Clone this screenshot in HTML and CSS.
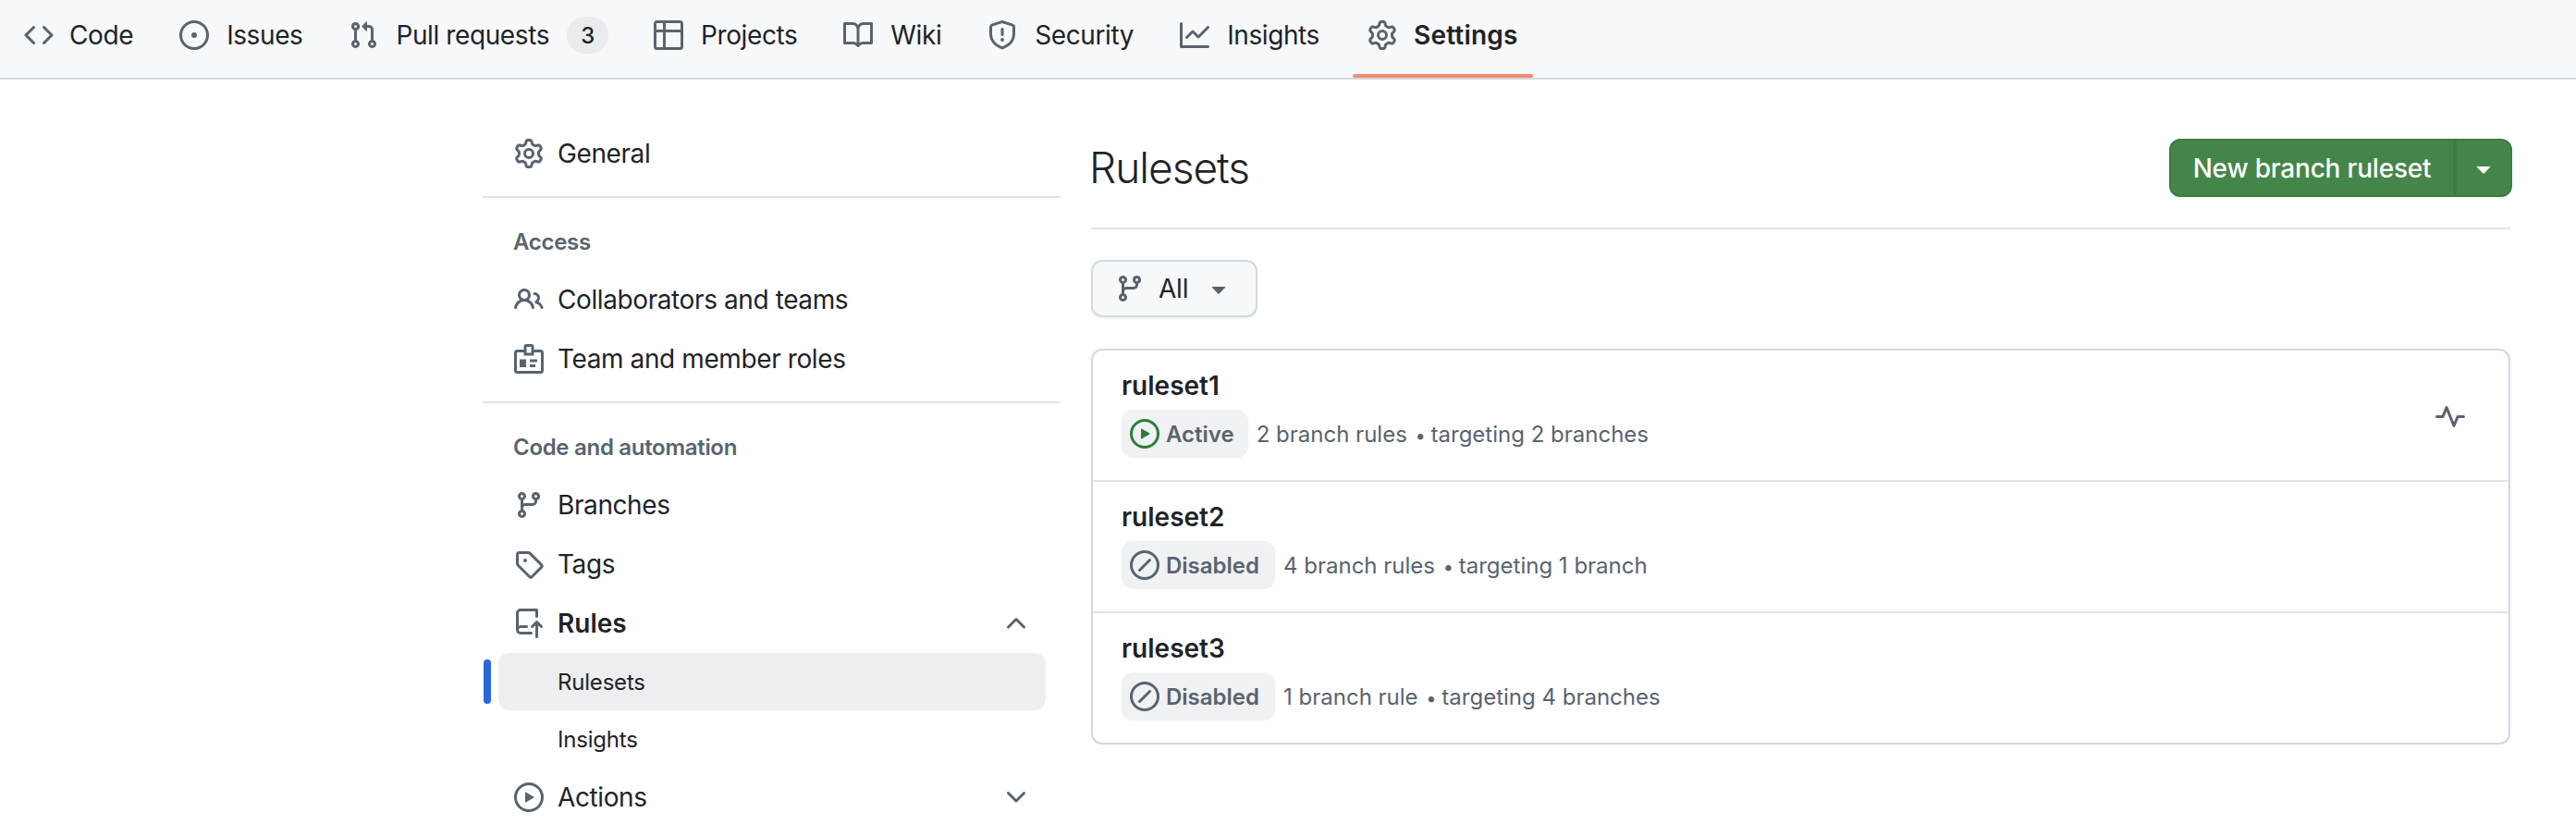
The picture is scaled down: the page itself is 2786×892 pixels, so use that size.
FILE: index.html
```html
<!DOCTYPE html>
<html lang="en">
<head>
    <meta charset="UTF-8">
    <meta name="viewport" content="width=device-width, initial-scale=1.0">
    <title>Rulesets</title>
    <link rel="stylesheet" href="styles.css">
</head>
<body>
    <svg class="sprite" xmlns="http://www.w3.org/2000/svg">
        <symbol id="i-code" viewBox="0 0 16 16"><path d="m11.28 3.22 4.25 4.25a.75.75 0 0 1 0 1.06l-4.25 4.25a.749.749 0 0 1-1.275-.326.749.749 0 0 1 .215-.734L13.94 8l-3.72-3.72a.749.749 0 0 1 .326-1.275.749.749 0 0 1 .734.215Zm-6.56 0a.751.751 0 0 1 1.042.018.751.751 0 0 1 .018 1.042L2.06 8l3.72 3.72a.749.749 0 0 1-.326 1.275.749.749 0 0 1-.734-.215L.47 8.53a.75.75 0 0 1 0-1.06Z"/></symbol>
        <symbol id="i-issue" viewBox="0 0 16 16"><path d="M8 9.5a1.5 1.5 0 1 0 0-3 1.5 1.5 0 0 0 0 3Z"/><path d="M8 0a8 8 0 1 1 0 16A8 8 0 0 1 8 0ZM1.5 8a6.5 6.5 0 1 0 13 0 6.5 6.5 0 0 0-13 0Z"/></symbol>
        <symbol id="i-pull" viewBox="0 0 16 16"><path d="M1.5 3.25a2.25 2.25 0 1 1 3 2.122v5.256a2.251 2.251 0 1 1-1.5 0V5.372A2.25 2.25 0 0 1 1.5 3.25Zm5.677-.177L9.573.677A.25.25 0 0 1 10 .854V2.5h1A2.5 2.5 0 0 1 13.5 5v5.628a2.251 2.251 0 1 1-1.5 0V5a1 1 0 0 0-1-1h-1v1.646a.25.25 0 0 1-.427.177L7.177 3.427a.25.25 0 0 1 0-.354ZM3.75 2.5a.75.75 0 1 0 0 1.5.75.75 0 0 0 0-1.5Zm0 9.5a.75.75 0 1 0 0 1.5.75.75 0 0 0 0-1.5Zm8.25.75a.75.75 0 1 0 1.5 0 .75.75 0 0 0-1.5 0Z"/></symbol>
        <symbol id="i-table" viewBox="0 0 16 16"><path d="M0 1.75C0 .784.784 0 1.75 0h12.5C15.216 0 16 .784 16 1.75v12.5A1.75 1.75 0 0 1 14.25 16H1.75A1.75 1.75 0 0 1 0 14.25ZM6.5 6.5v8h7.75a.25.25 0 0 0 .25-.25V6.5Zm8-1.5V1.75a.25.25 0 0 0-.25-.25H6.5V5Zm-13 1.5v7.75c0 .138.112.25.25.25H5v-8ZM5 5V1.5H1.75a.25.25 0 0 0-.25.25V5Z"/></symbol>
        <symbol id="i-book" viewBox="0 0 16 16"><path d="M0 1.75A.75.75 0 0 1 .75 1h4.253c1.227 0 2.317.59 3 1.501A3.743 3.743 0 0 1 11.006 1h4.245a.75.75 0 0 1 .75.75v10.5a.75.75 0 0 1-.75.75h-4.507a2.25 2.25 0 0 0-1.591.659l-.622.621a.75.75 0 0 1-1.06 0l-.622-.621A2.25 2.25 0 0 0 5.258 13H.75a.75.75 0 0 1-.75-.75Zm7.251 10.324.004-5.073-.002-2.253A2.25 2.25 0 0 0 5.003 2.5H1.5v9h3.757a3.75 3.75 0 0 1 1.994.574ZM8.755 4.75l-.004 7.322a3.752 3.752 0 0 1 1.992-.572H14.5v-9h-3.495a2.25 2.25 0 0 0-2.25 2.25Z"/></symbol>
        <symbol id="i-shield" viewBox="0 0 16 16"><path d="M7.467.133a1.748 1.748 0 0 1 1.066 0l5.25 1.68A1.75 1.75 0 0 1 15 3.48V7c0 1.566-.32 3.182-1.303 4.682-.983 1.498-2.585 2.813-5.032 3.855a1.697 1.697 0 0 1-1.33 0c-2.447-1.042-4.049-2.357-5.032-3.855C1.32 10.182 1 8.566 1 7V3.48a1.75 1.75 0 0 1 1.217-1.667Zm.61 1.429a.25.25 0 0 0-.153 0l-5.25 1.68a.25.25 0 0 0-.174.238V7c0 1.358.275 2.666 1.057 3.86.784 1.194 2.121 2.34 4.366 3.297a.196.196 0 0 0 .154 0c2.245-.956 3.582-2.104 4.366-3.298C13.225 9.666 13.5 8.36 13.5 7V3.48a.251.251 0 0 0-.174-.237l-5.25-1.68ZM8.75 4.75v3a.75.75 0 0 1-1.5 0v-3a.75.75 0 0 1 1.5 0ZM9 10.5a1 1 0 1 1-2 0 1 1 0 0 1 2 0Z"/></symbol>
        <symbol id="i-graph" viewBox="0 0 16 16"><path d="M1.5 1.75V13.5h13.75a.75.75 0 0 1 0 1.5H.75a.75.75 0 0 1-.75-.75V1.75a.75.75 0 0 1 1.5 0Zm14.28 2.53-5.25 5.25a.75.75 0 0 1-1.06 0L7 7.06 4.28 9.78a.751.751 0 0 1-1.042-.018.751.751 0 0 1-.018-1.042l3.25-3.25a.75.75 0 0 1 1.06 0L10 7.94l4.72-4.72a.751.751 0 0 1 1.042.018.751.751 0 0 1 .018 1.042Z"/></symbol>
        <symbol id="i-gear" viewBox="0 0 16 16"><path d="M8 0a8.2 8.2 0 0 1 .701.031C9.444.095 9.99.645 10.16 1.29l.288 1.107c.018.066.079.158.212.224.231.114.454.243.668.386.123.082.233.09.299.071l1.103-.303c.644-.176 1.392.021 1.82.63.27.385.506.792.704 1.218.315.675.111 1.422-.364 1.891l-.814.806c-.049.048-.098.147-.088.294.016.257.016.515 0 .772-.01.147.038.246.088.294l.814.806c.475.469.679 1.216.364 1.891a7.977 7.977 0 0 1-.704 1.217c-.428.61-1.176.807-1.82.63l-1.102-.302c-.067-.019-.177-.011-.3.071a5.909 5.909 0 0 1-.668.386c-.133.066-.194.158-.211.224l-.29 1.106c-.168.646-.715 1.196-1.458 1.26a8.006 8.006 0 0 1-1.402 0c-.743-.064-1.289-.614-1.458-1.26l-.289-1.106c-.018-.066-.079-.158-.212-.224a5.738 5.738 0 0 1-.668-.386c-.123-.082-.233-.09-.299-.071l-1.103.303c-.644.176-1.392-.021-1.82-.63a8.12 8.12 0 0 1-.704-1.218c-.315-.675-.111-1.422.363-1.891l.815-.806c.05-.048.098-.147.088-.294a6.214 6.214 0 0 1 0-.772c.01-.147-.038-.246-.088-.294l-.815-.806C.635 6.045.431 5.298.746 4.623a7.92 7.92 0 0 1 .704-1.217c.428-.61 1.176-.807 1.82-.63l1.102.302c.067.019.177.011.3-.071.214-.143.437-.272.668-.386.133-.066.194-.158.211-.224l.29-1.106C6.009.645 6.556.095 7.299.03 7.53.01 7.764 0 8 0Zm-.571 1.525c-.036.003-.108.036-.137.146l-.289 1.105c-.147.561-.549.967-.998 1.189-.173.086-.34.183-.5.29-.417.278-.97.423-1.529.27l-1.103-.303c-.109-.03-.175.016-.195.045-.22.312-.412.644-.573.99-.014.031-.021.11.059.19l.815.806c.411.406.562.957.53 1.456a4.709 4.709 0 0 0 0 .582c.032.499-.119 1.05-.53 1.456l-.815.806c-.081.08-.073.159-.059.19.162.346.353.677.573.989.02.03.085.076.195.046l1.102-.303c.56-.153 1.113-.008 1.53.27.161.107.328.204.501.29.447.222.85.629.997 1.189l.289 1.105c.029.109.101.143.137.146a6.6 6.6 0 0 0 1.142 0c.036-.003.108-.036.137-.146l.289-1.105c.147-.561.549-.967.998-1.189.173-.086.34-.183.5-.29.417-.278.97-.423 1.529-.27l1.103.303c.109.029.175-.016.195-.045.22-.313.411-.644.573-.99.014-.031.021-.11-.059-.19l-.815-.806c-.411-.406-.562-.957-.53-1.456a4.709 4.709 0 0 0 0-.582c-.032-.499.119-1.05.53-1.456l.815-.806c.081-.08.073-.159.059-.19a6.464 6.464 0 0 0-.573-.989c-.02-.03-.085-.076-.195-.046l-1.102.303c-.56.153-1.113.008-1.53-.27a4.44 4.44 0 0 0-.501-.29c-.447-.222-.85-.629-.997-1.189l-.289-1.105c-.029-.11-.101-.143-.137-.146a6.6 6.6 0 0 0-1.142 0ZM11 8a3 3 0 1 1-6 0 3 3 0 0 1 6 0ZM9.5 8a1.5 1.5 0 1 0-3.001.001A1.5 1.5 0 0 0 9.5 8Z"/></symbol>
        <symbol id="i-people" viewBox="0 0 16 16"><path d="M2 5.5a3.5 3.5 0 1 1 5.898 2.549 5.508 5.508 0 0 1 3.034 4.084.75.75 0 1 1-1.482.235 4 4 0 0 0-7.9 0 .75.75 0 0 1-1.482-.236A5.507 5.507 0 0 1 3.102 8.05 3.493 3.493 0 0 1 2 5.5ZM11 4a3.001 3.001 0 0 1 2.22 5.018 5.01 5.01 0 0 1 2.56 3.012.749.749 0 0 1-.885.954.752.752 0 0 1-.549-.514 3.507 3.507 0 0 0-2.522-2.372.75.75 0 0 1-.574-.73v-.352a.75.75 0 0 1 .416-.672A1.5 1.5 0 0 0 11 5.5.75.75 0 0 1 11 4Zm-5.5-.5a2 2 0 1 0-.001 3.999A2 2 0 0 0 5.5 3.5Z"/></symbol>
        <symbol id="i-badge" viewBox="0 0 16 16"><g fill="none" stroke="currentColor" stroke-width="1.5"><path d="M5.5 3.75H1.75a1 1 0 0 0-1 1v9.5a1 1 0 0 0 1 1h12.5a1 1 0 0 0 1-1v-9.5a1 1 0 0 0-1-1H10.5"/><path d="M6 5.5V1.5a.75.75 0 0 1 .75-.75h2.5a.75.75 0 0 1 .75.75v4h-4Z"/><path d="M8.5 9h4M8.5 11.75h3"/></g><path d="M3 8.25h3.5v4.25H3Z"/></symbol>
        <symbol id="i-branch" viewBox="0 0 16 16"><path d="M9.5 3.25a2.25 2.25 0 1 1 3 2.122V6A2.5 2.5 0 0 1 10 8.5H6a1 1 0 0 0-1 1v1.128a2.251 2.251 0 1 1-1.5 0V5.372a2.25 2.25 0 1 1 1.5 0v1.836A2.493 2.493 0 0 1 6 7h4a1 1 0 0 0 1-1v-.628A2.25 2.25 0 0 1 9.5 3.25Zm-6 0a.75.75 0 1 0 1.5 0 .75.75 0 0 0-1.5 0Zm8.25-.75a.75.75 0 1 0 0 1.5.75.75 0 0 0 0-1.5ZM4.25 12a.75.75 0 1 0 0 1.5.75.75 0 0 0 0-1.5Z"/></symbol>
        <symbol id="i-tag" viewBox="0 0 16 16"><path d="M1 7.775V2.75C1 1.784 1.784 1 2.75 1h5.025c.464 0 .91.184 1.238.513l6.25 6.25a1.75 1.75 0 0 1 0 2.474l-5.026 5.026a1.75 1.75 0 0 1-2.474 0l-6.25-6.25A1.752 1.752 0 0 1 1 7.775Zm1.5 0c0 .066.026.13.073.177l6.25 6.25a.25.25 0 0 0 .354 0l5.025-5.025a.25.25 0 0 0 0-.354l-6.25-6.25a.25.25 0 0 0-.177-.073H2.75a.25.25 0 0 0-.25.25ZM6 5a1 1 0 1 1 0 2 1 1 0 0 1 0-2Z"/></symbol>
        <symbol id="i-push" viewBox="0 0 16 16"><path d="M1 2.5A2.5 2.5 0 0 1 3.5 0h8.75a.75.75 0 0 1 .75.75v3.5a.75.75 0 0 1-1.5 0V1.5h-8a1 1 0 0 0-1 1v6.708A2.493 2.493 0 0 1 3.5 9h3.25a.75.75 0 0 1 0 1.5H3.5a1 1 0 0 0 0 2h5.75a.75.75 0 0 1 0 1.5H3.5A2.5 2.5 0 0 1 1 11.5Zm13.23 7.79h-.001l-1.224-1.224v6.184a.75.75 0 0 1-1.5 0V9.066L10.28 10.29a.75.75 0 0 1-1.06-1.061l2.505-2.504a.75.75 0 0 1 1.06 0L15.29 9.23a.751.751 0 0 1-.018 1.042.751.751 0 0 1-1.042.018Z"/></symbol>
        <symbol id="i-play" viewBox="0 0 16 16"><path d="M8 0a8 8 0 1 1 0 16A8 8 0 0 1 8 0ZM1.5 8a6.5 6.5 0 1 0 13 0 6.5 6.5 0 0 0-13 0Zm4.879-2.773 4.264 2.559a.25.25 0 0 1 0 .428l-4.264 2.559A.25.25 0 0 1 6 10.559V5.442a.25.25 0 0 1 .379-.215Z"/></symbol>
        <symbol id="i-up" viewBox="0 0 16 16"><path d="M3.22 10.53a.749.749 0 0 1 0-1.06l4.25-4.25a.749.749 0 0 1 1.06 0l4.25 4.25a.749.749 0 0 1-.326 1.275.749.749 0 0 1-.734-.215L8 6.811 4.28 10.53a.75.75 0 0 1-1.06 0Z"/></symbol>
        <symbol id="i-down" viewBox="0 0 16 16"><path d="M12.78 5.22a.749.749 0 0 1 0 1.06l-4.25 4.25a.749.749 0 0 1-1.06 0L3.22 6.28a.749.749 0 0 1 .326-1.275.749.749 0 0 1 .734.215L8 8.939l3.72-3.719a.749.749 0 0 1 1.06 0Z"/></symbol>
        <symbol id="i-caret" viewBox="0 0 16 16"><path d="m4.427 7.427 3.396 3.396a.25.25 0 0 0 .354 0l3.396-3.396A.25.25 0 0 0 11.396 7H4.604a.25.25 0 0 0-.177.427Z"/></symbol>
        <symbol id="i-slash" viewBox="0 0 16 16"><path d="M8 0a8 8 0 1 1 0 16A8 8 0 0 1 8 0ZM1.5 8a6.5 6.5 0 1 0 13 0 6.5 6.5 0 0 0-13 0Zm9.78-2.22-5.5 5.5a.749.749 0 0 1-1.275-.326.749.749 0 0 1 .215-.734l5.5-5.5a.751.751 0 0 1 1.042.018.751.751 0 0 1 .018 1.042Z"/></symbol>
        <symbol id="i-pulse" viewBox="0 0 16 16"><path d="M6 2c.306 0 .582.187.696.471L10 10.731l1.304-3.26A.751.751 0 0 1 12 7h3.25a.75.75 0 0 1 0 1.5h-2.742l-1.812 4.528a.751.751 0 0 1-1.392 0L6 4.77 4.696 8.03A.75.75 0 0 1 4 8.5H.75a.75.75 0 0 1 0-1.5h2.742l1.812-4.529A.751.751 0 0 1 6 2Z"/></symbol>
    </svg>

    <nav class="tabs">
        <a class="tab"><svg class="icon"><use href="#i-code"/></svg>Code</a>
        <a class="tab"><svg class="icon"><use href="#i-issue"/></svg>Issues</a>
        <a class="tab"><svg class="icon"><use href="#i-pull"/></svg>Pull requests<span class="counter">3</span></a>
        <a class="tab"><svg class="icon"><use href="#i-table"/></svg>Projects</a>
        <a class="tab"><svg class="icon"><use href="#i-book"/></svg>Wiki</a>
        <a class="tab"><svg class="icon"><use href="#i-shield"/></svg>Security</a>
        <a class="tab"><svg class="icon"><use href="#i-graph"/></svg>Insights</a>
        <a class="tab selected"><svg class="icon"><use href="#i-gear"/></svg>Settings</a>
    </nav>

    <div class="layout">
        <aside class="side">
            <a class="side-row"><svg class="icon"><use href="#i-gear"/></svg>General</a>
            <hr class="side-line">
            <h3 class="side-head">Access</h3>
            <a class="side-row"><svg class="icon"><use href="#i-people"/></svg>Collaborators and teams</a>
            <a class="side-row"><svg class="icon"><use href="#i-badge"/></svg>Team and member roles</a>
            <hr class="side-line">
            <h3 class="side-head">Code and automation</h3>
            <a class="side-row"><svg class="icon"><use href="#i-branch"/></svg>Branches</a>
            <a class="side-row"><svg class="icon"><use href="#i-tag"/></svg>Tags</a>
            <a class="side-row open"><svg class="icon"><use href="#i-push"/></svg>Rules<svg class="icon chev"><use href="#i-up"/></svg></a>
            <a class="side-sub current">Rulesets</a>
            <a class="side-sub">Insights</a>
            <a class="side-row"><svg class="icon"><use href="#i-play"/></svg>Actions<svg class="icon chev"><use href="#i-down"/></svg></a>
        </aside>

        <main class="main">
            <header class="page-head">
                <h1>Rulesets</h1>
                <div class="split-btn">
                    <button class="new-btn">New branch ruleset</button>
                    <button class="new-caret"><svg class="icon"><use href="#i-caret"/></svg></button>
                </div>
            </header>

            <button class="filter"><svg class="icon"><use href="#i-branch"/></svg><span>All</span><svg class="icon caret"><use href="#i-caret"/></svg></button>

            <ul class="rulesets">
                <li class="ruleset">
                    <div>
                        <div class="name">ruleset1</div>
                        <div class="meta">
                            <span class="state active"><svg class="icon"><use href="#i-play"/></svg><b>Active</b></span>
                            <span>2 branch rules <i>•</i> targeting 2 branches</span>
                        </div>
                    </div>
                    <svg class="icon pulse"><use href="#i-pulse"/></svg>
                </li>
                <li class="ruleset">
                    <div>
                        <div class="name">ruleset2</div>
                        <div class="meta">
                            <span class="state"><svg class="icon"><use href="#i-slash"/></svg><b>Disabled</b></span>
                            <span>4 branch rules <i>•</i> targeting 1 branch</span>
                        </div>
                    </div>
                </li>
                <li class="ruleset">
                    <div>
                        <div class="name">ruleset3</div>
                        <div class="meta">
                            <span class="state"><svg class="icon"><use href="#i-slash"/></svg><b>Disabled</b></span>
                            <span>1 branch rule <i>•</i> targeting 4 branches</span>
                        </div>
                    </div>
                </li>
            </ul>
        </main>
    </div>
</body>
</html>
```

FILE: styles.css
```css
html, body {
    height: 892px;
    overflow: hidden;
}
body {
    margin: 0;
    background: #fff;
    color: #1f2328;
    font-family: Inter, "Noto Sans", sans-serif;
    font-size: 28px;
    letter-spacing: -0.4px;
}
.sprite {
    display: none;
}
.icon {
    width: 32px;
    height: 32px;
    flex: none;
    fill: #59636e;
    color: #59636e;
}

/* top tabs */
.tabs {
    display: flex;
    height: 84px;
    padding-left: 10px;
    gap: 18px;
    background: #f6f8fa;
    border-bottom: 2px solid #d1d9e0;
}
.tab {
    display: flex;
    align-items: center;
    gap: 19px;
    padding: 0 16px;
    margin-top: -8px;
    height: 92px;
    box-sizing: border-box;
    white-space: nowrap;
}
.tab:first-child {
    gap: 17px;
}
.tab.selected {
    gap: 18px;
    font-weight: 600;
    letter-spacing: 0.2px;
    margin-left: 2px;
    position: relative;
}
.tab.selected::after {
    content: "";
    position: absolute;
    left: 0;
    right: 0;
    bottom: 0;
    height: 4px;
    border-radius: 2px;
    background: #f08d75;
}
.counter {
    display: inline-flex;
    align-items: center;
    justify-content: center;
    width: 45px;
    height: 40px;
    margin-right: -1px;
    border-radius: 20px;
    background: #e9ebee;
    font-size: 24px;
    font-weight: 500;
}

.layout {
    display: flex;
    padding-left: 522px;
    gap: 33px;
}

/* sidebar */
.side {
    width: 625px;
    flex: none;
    padding-top: 48px;
}
.side-row {
    display: flex;
    align-items: center;
    gap: 15px;
    height: 64px;
    padding: 0 32px 0 34px;
}
.side-row .chev {
    margin-left: auto;
}
.side-row.open {
    font-weight: 600;
    letter-spacing: 0;
}
.side-line {
    border: 0;
    height: 2px;
    margin: 14px 0 0;
    background: #dfe4e9;
}
.side-head {
    margin: 24px 0 6px;
    padding-left: 33px;
    font-size: 24px;
    font-weight: 600;
    line-height: 48px;
    color: #59636e;
    letter-spacing: -0.3px;
}
.side-sub {
    display: flex;
    align-items: center;
    height: 62px;
    margin: 0 16px 0 17px;
    padding-left: 64px;
    font-size: 24px;
    letter-spacing: -0.2px;
    border-radius: 12px;
}
.side-sub.current {
    background: #eceef0;
    position: relative;
}
.side-sub.current::before {
    content: "";
    position: absolute;
    left: -16px;
    top: 7px;
    width: 8px;
    height: 48px;
    border-radius: 4px;
    background: #2a67dd;
}

/* main column */
.main {
    width: 1535px;
    padding-top: 64px;
}
.page-head {
    display: flex;
    justify-content: space-between;
    padding-bottom: 33px;
    border-bottom: 2px solid #dfe4e9;
}
.page-head h1 {
    margin: 0 0 0 -2px;
    font-size: 46px;
    font-weight: 300;
    line-height: 63px;
    letter-spacing: -1px;
}
.split-btn {
    display: flex;
    height: 63px;
    margin-right: -2px;
    box-shadow: 0 2px 0 rgba(31, 35, 40, 0.04);
    border-radius: 12px;
}
.split-btn button {
    font: inherit;
    font-weight: 500;
    letter-spacing: -0.2px;
    color: #fff;
    background: #44864a;
    border: 2px solid #3d7b45;
    cursor: pointer;
}
.new-btn {
    width: 309px;
    padding: 0;
    border-radius: 12px 0 0 12px;
    border-right-width: 1px;
}
.new-caret {
    display: flex;
    align-items: center;
    justify-content: center;
    width: 62px;
    padding: 0;
    border-radius: 0 12px 12px 0;
    border-left-width: 1px;
}
.new-caret .icon {
    fill: #fff;
}
.filter {
    display: flex;
    align-items: center;
    width: 180px;
    height: 62px;
    margin: 33px 0 34px;
    padding: 0 0 0 24px;
    gap: 15px;
    font: inherit;
    letter-spacing: -0.2px;
    color: #1f2328;
    background: #f6f8fa;
    border: 2px solid #d1d9e0;
    border-radius: 12px;
    box-shadow: 0 2px 0 rgba(31, 35, 40, 0.04);
}
.filter .caret {
    margin-left: 2px;
}

/* ruleset list */
.rulesets {
    list-style: none;
    margin: 0;
    padding: 0;
    border: 2px solid #d1d9e0;
    border-radius: 12px;
}
.ruleset {
    display: flex;
    align-items: center;
    justify-content: space-between;
    height: 134px;
    padding: 0 47px 6px 31px;
}
.ruleset + .ruleset {
    border-top: 2px solid #dfe4e9;
}
.name {
    font-weight: 600;
    line-height: 40px;
    margin-bottom: 6px;
    letter-spacing: 0;
}
.meta {
    display: flex;
    align-items: center;
    gap: 9px;
    font-size: 24px;
    color: #59636e;
    letter-spacing: 0;
}
.meta i {
    font-style: normal;
    font-size: 20px;
    margin: 0 -1px 0 2px;
}
.state {
    display: inline-flex;
    align-items: center;
    height: 52px;
    padding: 0 17px 0 9px;
    gap: 7px;
    border-radius: 12px;
    background: #eff1f3;
}
.state.active {
    padding-right: 15px;
}
.state b {
    font-weight: 600;
    letter-spacing: 0;
}
.state.active .icon {
    fill: #2d7c3a;
}
.pulse {
    margin-top: 10px;
}
```
